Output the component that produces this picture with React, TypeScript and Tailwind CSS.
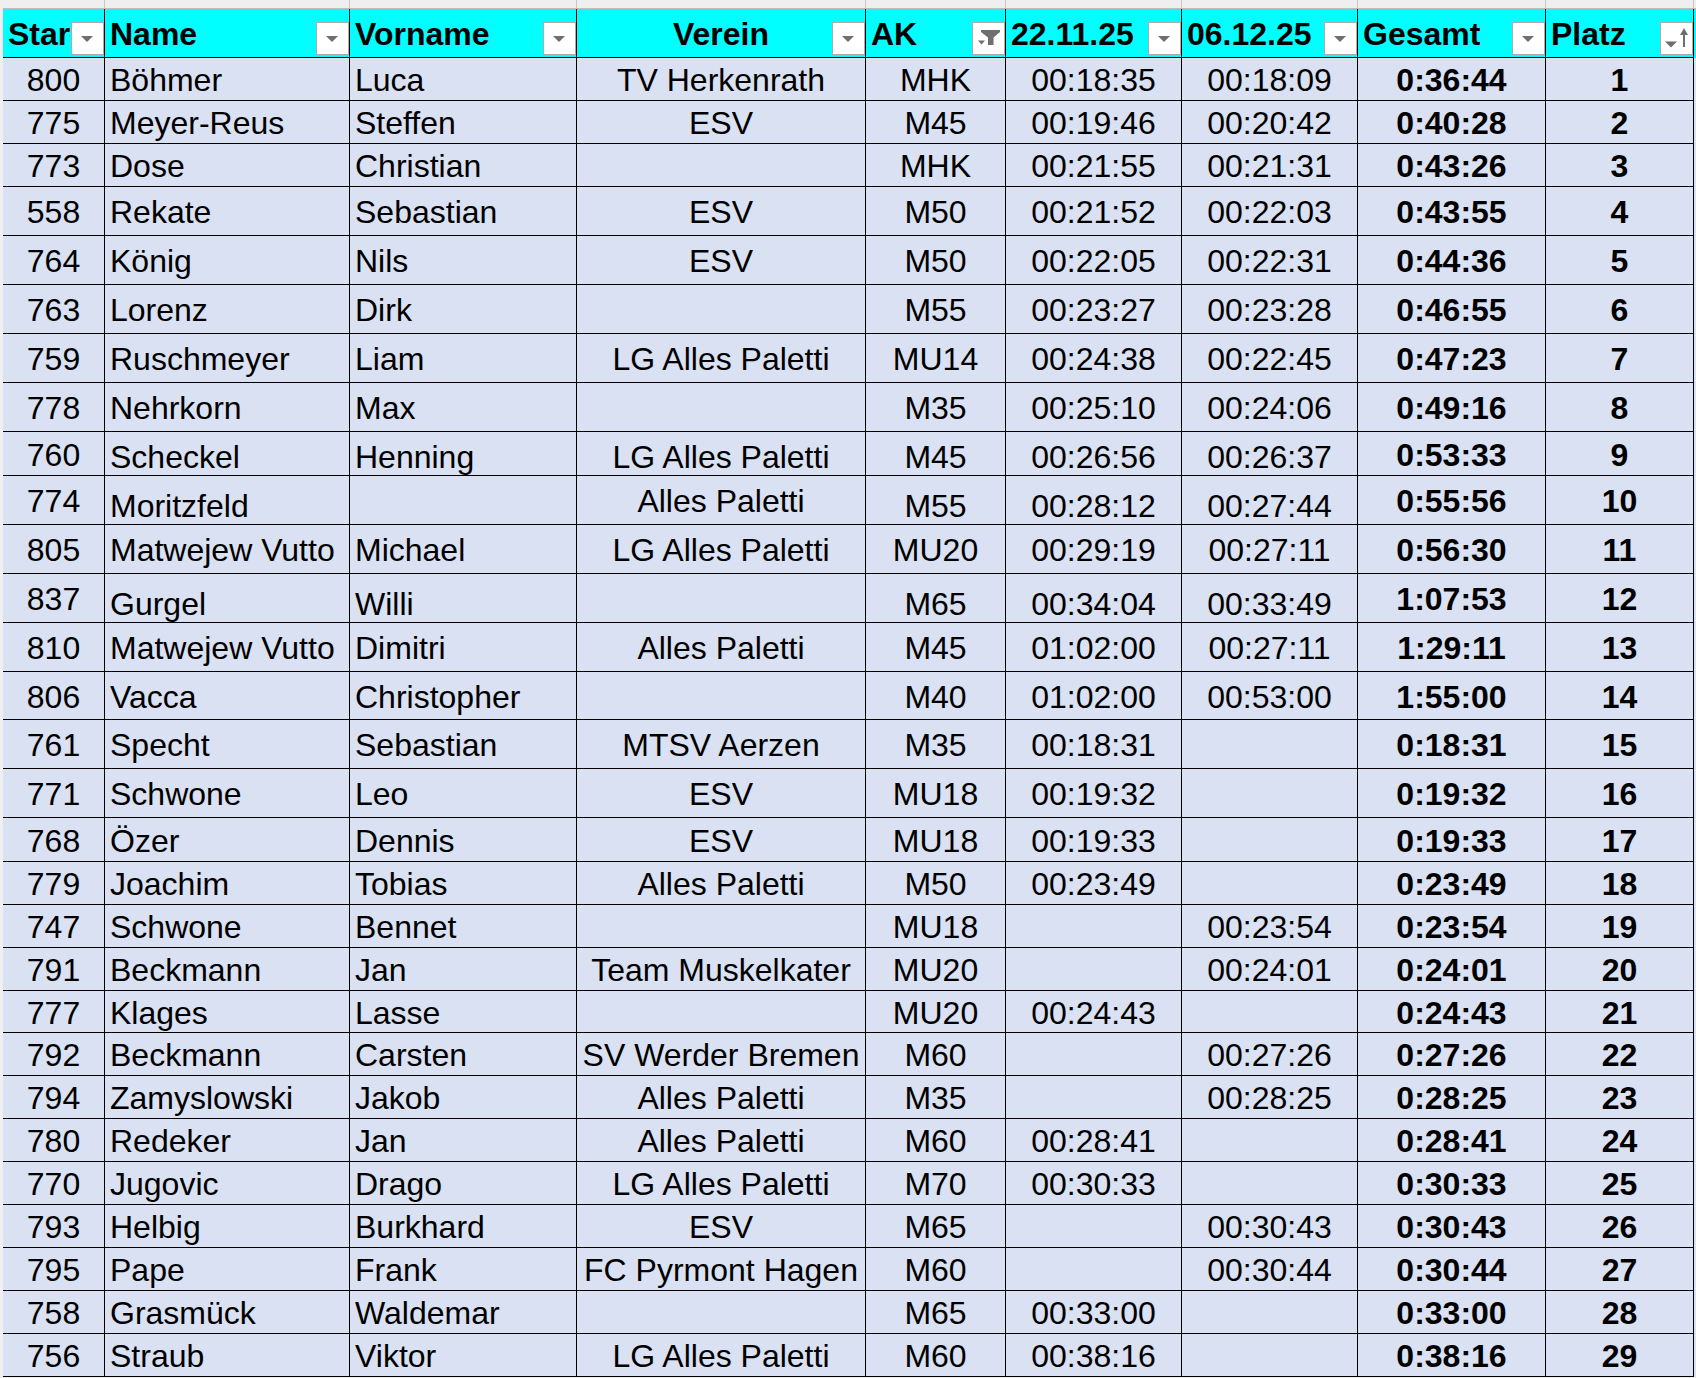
import React from 'react';

type Row = {
  cells: string[];
  h: string;
  low?: number[];
};

const grid = "grid grid-cols-[102px_245px_227px_289px_140px_176px_176px_188px_148px]";

const headers = ["Star", "Name", "Vorname", "Verein", "AK", "22.11.25", "06.12.25", "Gesamt", "Platz"];

// horizontal alignment per column
const justify = [
  "justify-center",
  "justify-start pl-[5px]",
  "justify-start pl-[5px]",
  "justify-center",
  "justify-center",
  "justify-center",
  "justify-center",
  "justify-center",
  "justify-center",
];

const rows: Row[] = [
  { cells: ["800", "Böhmer", "Luca", "TV Herkenrath", "MHK", "00:18:35", "00:18:09", "0:36:44", "1"], h: "h-[43px]" },
  { cells: ["775", "Meyer-Reus", "Steffen", "ESV", "M45", "00:19:46", "00:20:42", "0:40:28", "2"], h: "h-[43px]" },
  { cells: ["773", "Dose", "Christian", "", "MHK", "00:21:55", "00:21:31", "0:43:26", "3"], h: "h-[43px]" },
  { cells: ["558", "Rekate", "Sebastian", "ESV", "M50", "00:21:52", "00:22:03", "0:43:55", "4"], h: "h-[49px]" },
  { cells: ["764", "König", "Nils", "ESV", "M50", "00:22:05", "00:22:31", "0:44:36", "5"], h: "h-[49px]" },
  { cells: ["763", "Lorenz", "Dirk", "", "M55", "00:23:27", "00:23:28", "0:46:55", "6"], h: "h-[49px]" },
  { cells: ["759", "Ruschmeyer", "Liam", "LG Alles Paletti", "MU14", "00:24:38", "00:22:45", "0:47:23", "7"], h: "h-[49px]" },
  { cells: ["778", "Nehrkorn", "Max", "", "M35", "00:25:10", "00:24:06", "0:49:16", "8"], h: "h-[49px]" },
  { cells: ["760", "Scheckel", "Henning", "LG Alles Paletti", "M45", "00:26:56", "00:26:37", "0:53:33", "9"], h: "h-[44px]", low: [1, 2, 3, 4, 5, 6] },
  { cells: ["774", "Moritzfeld", "", "Alles Paletti", "M55", "00:28:12", "00:27:44", "0:55:56", "10"], h: "h-[49px]", low: [1, 2, 4, 5, 6] },
  { cells: ["805", "Matwejew Vutto", "Michael", "LG Alles Paletti", "MU20", "00:29:19", "00:27:11", "0:56:30", "11"], h: "h-[49px]" },
  { cells: ["837", "Gurgel", "Willi", "", "M65", "00:34:04", "00:33:49", "1:07:53", "12"], h: "h-[49px]", low: [1, 2, 4, 5, 6] },
  { cells: ["810", "Matwejew Vutto", "Dimitri", "Alles Paletti", "M45", "01:02:00", "00:27:11", "1:29:11", "13"], h: "h-[49px]" },
  { cells: ["806", "Vacca", "Christopher", "", "M40", "01:02:00", "00:53:00", "1:55:00", "14"], h: "h-[48px]" },
  { cells: ["761", "Specht", "Sebastian", "MTSV Aerzen", "M35", "00:18:31", "", "0:18:31", "15"], h: "h-[49px]" },
  { cells: ["771", "Schwone", "Leo", "ESV", "MU18", "00:19:32", "", "0:19:32", "16"], h: "h-[49px]" },
  { cells: ["768", "Özer", "Dennis", "ESV", "MU18", "00:19:33", "", "0:19:33", "17"], h: "h-[44px]" },
  { cells: ["779", "Joachim", "Tobias", "Alles Paletti", "M50", "00:23:49", "", "0:23:49", "18"], h: "h-[43px]" },
  { cells: ["747", "Schwone", "Bennet", "", "MU18", "", "00:23:54", "0:23:54", "19"], h: "h-[43px]" },
  { cells: ["791", "Beckmann", "Jan", "Team Muskelkater", "MU20", "", "00:24:01", "0:24:01", "20"], h: "h-[43px]" },
  { cells: ["777", "Klages", "Lasse", "", "MU20", "00:24:43", "", "0:24:43", "21"], h: "h-[42px]" },
  { cells: ["792", "Beckmann", "Carsten", "SV Werder Bremen", "M60", "", "00:27:26", "0:27:26", "22"], h: "h-[43px]" },
  { cells: ["794", "Zamyslowski", "Jakob", "Alles Paletti", "M35", "", "00:28:25", "0:28:25", "23"], h: "h-[43px]" },
  { cells: ["780", "Redeker", "Jan", "Alles Paletti", "M60", "00:28:41", "", "0:28:41", "24"], h: "h-[43px]" },
  { cells: ["770", "Jugovic", "Drago", "LG Alles Paletti", "M70", "00:30:33", "", "0:30:33", "25"], h: "h-[43px]" },
  { cells: ["793", "Helbig", "Burkhard", "ESV", "M65", "", "00:30:43", "0:30:43", "26"], h: "h-[43px]" },
  { cells: ["795", "Pape", "Frank", "FC Pyrmont Hagen", "M60", "", "00:30:44", "0:30:44", "27"], h: "h-[43px]" },
  { cells: ["758", "Grasmück", "Waldemar", "", "M65", "00:33:00", "", "0:33:00", "28"], h: "h-[43px]" },
  { cells: ["756", "Straub", "Viktor", "LG Alles Paletti", "M60", "00:38:16", "", "0:38:16", "29"], h: "h-[43px]" },
];

const FilterButton: React.FC<{ kind: 'drop' | 'filter' | 'sort' }> = ({ kind }) => (
  <div className="absolute right-0 top-[13px] w-[33px] h-[33px] bg-white border border-[#ababab]">
    <svg width="31" height="31" viewBox="0 0 31 31" className="block">
      {kind === 'drop' && <polygon points="9,13 21,13 15,19" fill="#6f6f6f" />}
      {kind === 'filter' && (
        <>
          <polygon points="5,17.5 12,17.5 8.5,21.5" fill="#6f6f6f" />
          <polygon points="8,7 27,7 27,9 20.5,14.5 20.5,22 15,22 15,14.5 8,9" fill="#6f6f6f" />
        </>
      )}
      {kind === 'sort' && (
        <>
          <polygon points="4,18.5 16,18.5 10,24.5" fill="#6f6f6f" />
          <polygon points="19,12 23,5 27,12" fill="#6f6f6f" />
          <rect x="22" y="11" width="2" height="13" fill="#6f6f6f" />
        </>
      )}
    </svg>
  </div>
);

const App: React.FC = () => {
  return (
    <div className="min-h-screen w-[1696px] bg-[#efefef] pl-[3px] font-['Liberation_Sans',Arial,sans-serif] text-black">
      {/* remnant of the row above the header */}
      <div className={`${grid} h-[9px] border-b border-[#bdbdbd]`}>
        {headers.map((h) => (
          <div key={h} className="border-r border-[#c8c8c8]" />
        ))}
      </div>

      <div className={`${grid} h-[49px] bg-[#00ffff]`}>
        {headers.map((h, i) => (
          <div
            key={h}
            className={`relative flex items-center overflow-hidden whitespace-nowrap border-r border-b border-black pt-[2px] text-[32px] leading-[36px] font-bold ${
              i === 3 ? "justify-center" : "justify-start pl-[5px] pr-[33px]"
            }`}
          >
            <span className="overflow-hidden">{h}</span>
            <FilterButton kind={i === 4 ? 'filter' : i === 8 ? 'sort' : 'drop'} />
          </div>
        ))}
      </div>

      {rows.map((row) => (
        <div key={row.cells[0]} className={`${grid} ${row.h} bg-[#d9e1f2]`}>
          {row.cells.map((c, i) => (
            <div
              key={i}
              className={`flex overflow-hidden whitespace-nowrap border-r border-b border-black text-[32px] leading-[36px] ${
                justify[i]
              } ${row.low?.includes(i) ? "items-end" : "items-center pt-[2px]"} ${i >= 7 ? "font-bold" : ""}`}
            >
              {c}
            </div>
          ))}
        </div>
      ))}
    </div>
  );
};

export default App;
